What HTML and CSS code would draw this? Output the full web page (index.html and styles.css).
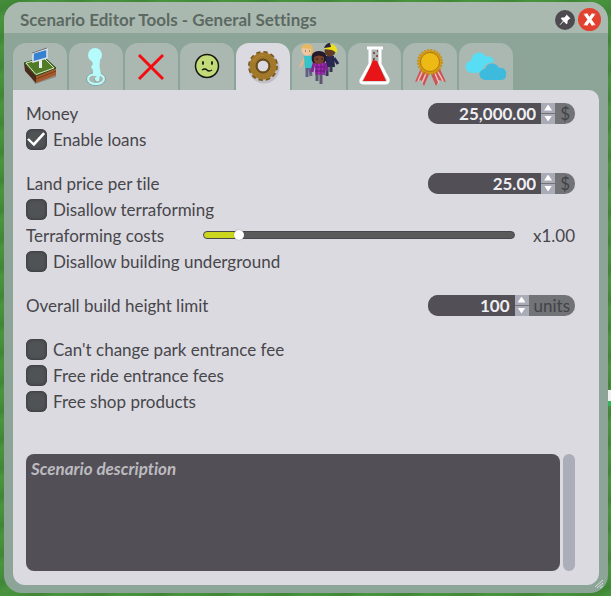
FILE: index.html
```html
<!DOCTYPE html>
<html lang="en">
<head>
    <meta charset="UTF-8">
    <meta name="viewport" content="width=device-width, initial-scale=1">
    <title>Scenario Editor Tools</title>
    <link rel="stylesheet" href="styles.css">
</head>
<body>

    <main class="window">
        <header class="titlebar">
            <h1>Scenario Editor Tools - General Settings</h1>
            <button type="button" class="pin" aria-label="Pin window">
                <svg viewBox="0 0 20 20" width="20" height="20">
                    <path d="M11.500 4.500L15.500 8.500L14.300 9L12.600 10.700L12.500 13.300L11.400 14.200L8.700 11.600L5 15L4.600 14.800L8 10.900L5.800 8.600L6.800 7.500L9.300 7.400L11 5.700Z" fill="#fff"/>
                </svg>
            </button>
            <button type="button" class="close" aria-label="Close window">
                <svg viewBox="0 0 24 24" width="23" height="23">
                    <path d="M8 6.500L16 17.500M16 6.500L8 17.500" stroke="#fff" stroke-width="3.400"/>
                    <path d="M6 6.500h4M14.500 6.500H18M6 17.500h4M14 17.500h4" stroke="#fff" stroke-width="1"/>
                </svg>
            </button>
        </header>

        <nav class="tabs" role="tablist">
            <button type="button" class="tab" role="tab" aria-label="Park">
                <svg viewBox="0 0 54 47" width="54" height="47">
                    <path d="M11 22L22 41L43 34V29L23 36Z" fill="#432c20" opacity=".3"/>
                    <path d="M11 20L23 33V40L12 28Z" fill="#4a2a1a"/>
                    <path d="M23 33L43 25V32L23 40Z" fill="#a65a2c"/>
                    <path d="M23 36L43 28" stroke="#7c3d1e" stroke-width="1"/>
                    <path d="M11 20L31 14L43 25L23 33Z" fill="#527b28" stroke="#294b20" stroke-width="1"/>
                    <path d="M13 20L31 15L41 25L23 31.500Z" fill="none" stroke="#d9e6bd" stroke-width="1"/>
                    <path d="M27.500 17V25" stroke="#e9eef1" stroke-width="3"/>
                    <path d="M20 10L34 6V15L20 19Z" fill="#3482d0" stroke="#dce3ea" stroke-width="1.500"/>
                    <path d="M19 10L34 5" stroke="#6b7277" stroke-width="1"/>
                </svg>
            </button>
            <button type="button" class="tab" role="tab" aria-label="Guests">
                <svg viewBox="0 0 54 47" width="54" height="47">
                    <ellipse cx="27" cy="36" rx="9.500" ry="6.500" fill="none" stroke="#7fa3a2" stroke-width="1"/>
                    <ellipse cx="27" cy="36" rx="8" ry="5" fill="none" stroke="#b8fcfb" stroke-width="2"/>
                    <circle cx="26" cy="12" r="7" fill="#b5fbfb"/>
                    <path d="M22 16H31L30.500 24L32 31L30.500 34L30 38H26V35L28 33H24L24 27L22 24L24 21Z" fill="#b5fbfb"/>
                    <path d="M25 36L27 39" stroke="#7fa3a2" stroke-width="1"/>
                </svg>
            </button>
            <button type="button" class="tab" role="tab" aria-label="Restrictions">
                <svg viewBox="0 0 54 47" width="54" height="47">
                    <path d="M15 12L39 36M39 12L15 36" stroke="#f30d10" stroke-width="3"/>
                </svg>
            </button>
            <button type="button" class="tab" role="tab" aria-label="Mood">
                <svg viewBox="0 0 54 47" width="54" height="47">
                    <circle cx="27" cy="23" r="11.500" fill="#c3da78" stroke="#15170f" stroke-width="1.500"/>
                    <ellipse cx="23" cy="20" rx="1" ry="2" fill="#15170f"/>
                    <ellipse cx="32" cy="20" rx="1" ry="2" fill="#15170f"/>
                    <path d="M22 27Q25 25 27 27Q29 29 32 27" fill="none" stroke="#15170f" stroke-width="1.500"/>
                </svg>
            </button>
            <button type="button" class="tab active" role="tab" aria-selected="true" aria-label="General settings">
                <svg viewBox="0 0 54 47" width="54" height="47">
                    <circle cx="28" cy="25" r="12" fill="none" stroke="#85808b" stroke-width="7" opacity=".3"/>
                    <circle cx="27" cy="23" r="13" fill="none" stroke="#775619" stroke-width="4" stroke-dasharray="4 2.807"/>
                    <circle cx="27" cy="23" r="9.500" fill="none" stroke="#a2792a" stroke-width="8"/>
                    <circle cx="27" cy="23" r="6.500" fill="none" stroke="#674c20" stroke-width="2"/>
                    <path d="M17 19Q20 12 28 12" fill="none" stroke="#b58835" stroke-width="1"/>
                </svg>
            </button>
            <button type="button" class="tab" role="tab" aria-label="People">
                <svg viewBox="0 0 54 47" width="54" height="47">
                    <path d="M13 15L8 24M20 15L23 20" stroke="#eab58b" stroke-width="2"/>
                    <path d="M12 13H20V26H13Z" fill="#37c3c7"/>
                    <path d="M15 25L15 34M18 25L19 33" stroke="#635f85" stroke-width="3"/>
                    <circle cx="15" cy="7" r="5.500" fill="#efc79e"/>
                    <path d="M9 7Q9 1 15 1Q22 1 21 8Q21 11 19 12V6L10 5Z" fill="#e7b860"/>
                    <path d="M13 8h1M17 8h1" stroke="#604432" stroke-width="1"/>
                    <path d="M34 13H42L43 24H34Z" fill="#29264f"/>
                    <path d="M42 15L46 21" stroke="#29264f" stroke-width="3"/>
                    <path d="M35 24V33M39 23V29" stroke="#383451" stroke-width="3"/>
                    <circle cx="38" cy="8" r="5.500" fill="#603c27"/>
                    <path d="M33 5Q34 0 39 1Q46 2 45 10L40 7L32 6Z" fill="#ecdf1c"/>
                    <path d="M32 5Q34 0 38 0L39 4Z" fill="#28213a"/>
                    <path d="M22 20L20 29M33 20L35 28" stroke="#812597" stroke-width="3"/>
                    <path d="M23 18H33V32H23Z" fill="#a528b7"/>
                    <path d="M25 19V31M29 18V31M32 20V30M23 24H33M23 28H33" stroke="#641b76" stroke-width="1"/>
                    <path d="M25 31V38M29 31V41" stroke="#5d5673" stroke-width="3"/>
                    <path d="M20 18Q18 8 27 8Q36 8 34 18Q32 21 21 20Z" fill="#271a27"/>
                    <path d="M22 14Q27 11 32 14V17Q31 21 27 21Q22 21 22 17Z" fill="#77432f"/>
                    <path d="M24 16h2M29 16h2" stroke="#211819" stroke-width="1"/>
                </svg>
            </button>
            <button type="button" class="tab" role="tab" aria-label="Research">
                <svg viewBox="0 0 54 47" width="54" height="47">
                    <path d="M22 7V22L14 38Q13 41 17 41H38Q42 41 40 37L33 22V7Z" fill="#75847f" opacity=".5"/>
                    <path d="M22 5V21L13 37Q12 40 16 40H37Q41 40 40 36L32 21V5" fill="#aab8b2" stroke="#fff" stroke-width="3"/>
                    <path d="M19 5H35" stroke="#fff" stroke-width="3"/>
                    <path d="M25 17L22 24L15 38H38L29 18Z" fill="#e71517"/>
                    <path d="M25 10h2M28 13h2M25 16h2M29 8h1" stroke="#934c50" stroke-width="2"/>
                </svg>
            </button>
            <button type="button" class="tab" role="tab" aria-label="Goals">
                <svg viewBox="0 0 54 47" width="54" height="47">
                    <path d="M18 25L12 39L18 37L21 43L27 29L33 43L36 37L43 39L36 24Z" fill="#cc5354"/>
                    <path d="M20 27L15 38M24 28L19 40M31 28L36 40M34 27L40 38" stroke="#edc0bb" stroke-width="1.500"/>
                    <circle cx="27" cy="19" r="11.500" fill="#d59a13"/>
                    <circle cx="27" cy="19" r="12" fill="none" stroke="#ca9117" stroke-width="2" stroke-dasharray="2 1.140"/>
                    <circle cx="27" cy="19" r="9.500" fill="#edb914" stroke="#aa7b15" stroke-width="1"/>
                </svg>
            </button>
            <button type="button" class="tab" role="tab" aria-label="Weather">
                <svg viewBox="0 0 54 47" width="54" height="47">
                    <path d="M14 30C5 30 4 19 12 18C13 8 24 7 27 14C31 12 35 15 35 19C27 20 25 23 24 26C23 29 20 30 14 30Z" fill="#57ddf4"/>
                    <path d="M27 37C19 37 18 27 26 26C28 19 37 19 40 25C45 24 48 28 47 32Q47 37 42 37Z" fill="#3ebadd"/>
                </svg>
            </button>
        </nav>

        <form class="panel">
            <div class="group">
                <div class="row">
                    <label for="money">Money</label>
                    <div class="spinbox">
                        <input type="text" id="money" value="25,000.00">
                        <div class="arrows">
                            <button type="button" class="up" aria-label="Increase money"></button>
                            <button type="button" class="down" aria-label="Decrease money"></button>
                        </div>
                        <span class="unit">$</span>
                    </div>
                </div>
                <div class="row">
                    <input type="checkbox" id="loans" checked>
                    <label for="loans">Enable loans</label>
                </div>
            </div>

            <div class="group">
                <div class="row">
                    <label for="land">Land price per tile</label>
                    <div class="spinbox">
                        <input type="text" id="land" value="25.00">
                        <div class="arrows">
                            <button type="button" class="up" aria-label="Increase land price"></button>
                            <button type="button" class="down" aria-label="Decrease land price"></button>
                        </div>
                        <span class="unit">$</span>
                    </div>
                </div>
                <div class="row">
                    <input type="checkbox" id="terraforming">
                    <label for="terraforming">Disallow terraforming</label>
                </div>
                <div class="row">
                    <label for="costs" class="slider-label">Terraforming costs</label>
                    <input type="range" id="costs" min="0" max="10" step="0.1" value="1">
                    <output for="costs">x1.00</output>
                </div>
                <div class="row">
                    <input type="checkbox" id="underground">
                    <label for="underground">Disallow building underground</label>
                </div>
            </div>

            <div class="group">
                <div class="row">
                    <label for="height">Overall build height limit</label>
                    <div class="spinbox">
                        <input type="text" id="height" value="100">
                        <div class="arrows">
                            <button type="button" class="up" aria-label="Increase height limit"></button>
                            <button type="button" class="down" aria-label="Decrease height limit"></button>
                        </div>
                        <span class="unit">units</span>
                    </div>
                </div>
            </div>

            <div class="group">
                <div class="row">
                    <input type="checkbox" id="entrance">
                    <label for="entrance">Can't change park entrance fee</label>
                </div>
                <div class="row">
                    <input type="checkbox" id="rides">
                    <label for="rides">Free ride entrance fees</label>
                </div>
                <div class="row">
                    <input type="checkbox" id="shops">
                    <label for="shops">Free shop products</label>
                </div>
            </div>

            <div class="description">
                <textarea aria-label="Scenario description" placeholder="Scenario description"></textarea>
                <div class="scrollbar"></div>
            </div>
        </form>

        <svg class="grip" viewBox="0 0 10 10" width="10" height="10">
            <path d="M1 8L9 1M3 9L9 4M6 9L9 7" stroke="#d5dfda" stroke-width="1"/>
        </svg>
    </main>

</body>
</html>
```
FILE: styles.css
```css
* {
    box-sizing: border-box;
}
body {
    display: flex;
    min-height: 100vh;
    margin: 0;
    padding: 2px 3px 3px 4px;
    font-family: Lato, sans-serif;
    font-size: 17px;
    font-variant-ligatures: none;
    color: #47464b;
    /* grass, with a bit of path showing at the right edge */
    background:
        linear-gradient(#f0f2ef 0 11px, #2fb557 11px) right 390px / 3px 16px no-repeat,
        repeating-linear-gradient(155deg, #468f3b 0, #3f8636 9px, #4a943e 17px, #468f3b 26px);
}
button {
    padding: 0;
    border: none;
    cursor: pointer;
}
svg {
    display: block;
    fill: none;
}

.window {
    position: relative;
    display: flex;
    flex-direction: column;
    flex: 1;
    min-width: 0;
    padding: 0 9px 8px;
    border-radius: 18px;
    background-color: #8da598;
    overflow: hidden;
}
.titlebar {
    display: flex;
    align-items: center;
    gap: 3px;
    height: 31px;
    margin: 0 -9px 10px;
    padding: 4px 7px 0 16px;
    background-color: #aab9b0;
}
.titlebar h1 {
    flex: 1;
    margin: 0;
    font-size: 17px;
    font-weight: 700;
    line-height: 24px;
    color: #5c6963;
}
.pin, .close {
    border-radius: 50%;
}
.pin {
    background-color: #4d4b50;
}
.close {
    background-color: #e3412f;
}

.tabs {
    display: grid;
    grid-template-columns: repeat(9, 1fr);
    gap: 2px;
    max-width: 500px;
}
.tab {
    display: flex;
    justify-content: center;
    height: 47px;
    border-radius: 13px 13px 0 0;
    background-color: #abb8b2;
    overflow: hidden;
}
.tab svg {
    flex: none;
}
.tab.active {
    background-color: #dbdae0;
}

.panel {
    display: flex;
    flex-direction: column;
    flex: 1;
    gap: 18px;
    padding: 10px 24px 14px 13px;
    border-radius: 0 10px 12px 12px;
    background-color: #dbdae0;
}
.row {
    display: flex;
    align-items: center;
    gap: 6px;
    height: 26px;
}

input[type="checkbox"] {
    display: grid;
    appearance: none;
    width: 21px;
    height: 21px;
    margin: 0;
    border-radius: 6px;
    background-color: #505356;
    box-shadow: inset 0 0 3px 1px #3c3d41;
}
input[type="checkbox"]:checked::before {
    content: "";
    background-color: #fff;
    clip-path: polygon(5% 52%, 14% 46%, 36% 68%, 82% 18%, 91% 26%, 38% 84%);
}

.spinbox {
    display: flex;
    width: 147px;
    height: 21px;
    margin-left: auto;
    border-radius: 10px;
    background-color: #717377;
    overflow: hidden;
}
.spinbox input {
    flex: 1;
    min-width: 0;
    padding: 0 5px;
    border: none;
    background-color: #524f56;
    font: bold 17px Lato, sans-serif;
    color: #efeef2;
    text-align: right;
}
.arrows {
    display: flex;
    flex-direction: column;
    gap: 1px;
    width: 14px;
}
.arrows button {
    display: grid;
    place-items: center;
    flex: 1;
    background-color: #a9abb6;
}
.arrows button::before {
    content: "";
    width: 8px;
    height: 6px;
    background-color: #fff;
}
.up::before {
    clip-path: polygon(50% 0, 100% 100%, 0 100%);
}
.down::before {
    clip-path: polygon(0 0, 100% 0, 50% 100%);
}
.unit {
    padding: 0 5px;
    line-height: 21px;
    color: #424347;
}

.slider-label {
    width: 171px;
}
input[type="range"] {
    flex: 1;
    appearance: none;
    min-width: 0;
    height: 8px;
    margin: 0;
    border: 1px solid #47474a;
    border-radius: 4px;
    background: linear-gradient(90deg, #cbd51d 11%, #5a5a5a 11%);
}
input[type="range"]::-webkit-slider-thumb {
    appearance: none;
    width: 10px;
    height: 10px;
    border-radius: 50%;
    background-color: #fff;
    box-shadow: 0 0 1px #66666a;
}
output {
    width: 54px;
    text-align: right;
}

.description {
    display: flex;
    flex: 1;
    gap: 3px;
    min-height: 100px;
    margin-top: 22px;
}
textarea {
    flex: 1;
    min-width: 0;
    padding: 4px 5px;
    border: none;
    border-radius: 8px;
    background-color: #524f56;
    font: italic bold 17px/22px Lato, sans-serif;
    font-variant-ligatures: none;
    color: #efeef2;
    resize: none;
}
textarea::placeholder {
    color: #bdbbc0;
}
.scrollbar {
    width: 12px;
    border-radius: 6px;
    background-color: #abadb8;
}
.grip {
    position: absolute;
    right: 4px;
    bottom: 4px;
}
```
